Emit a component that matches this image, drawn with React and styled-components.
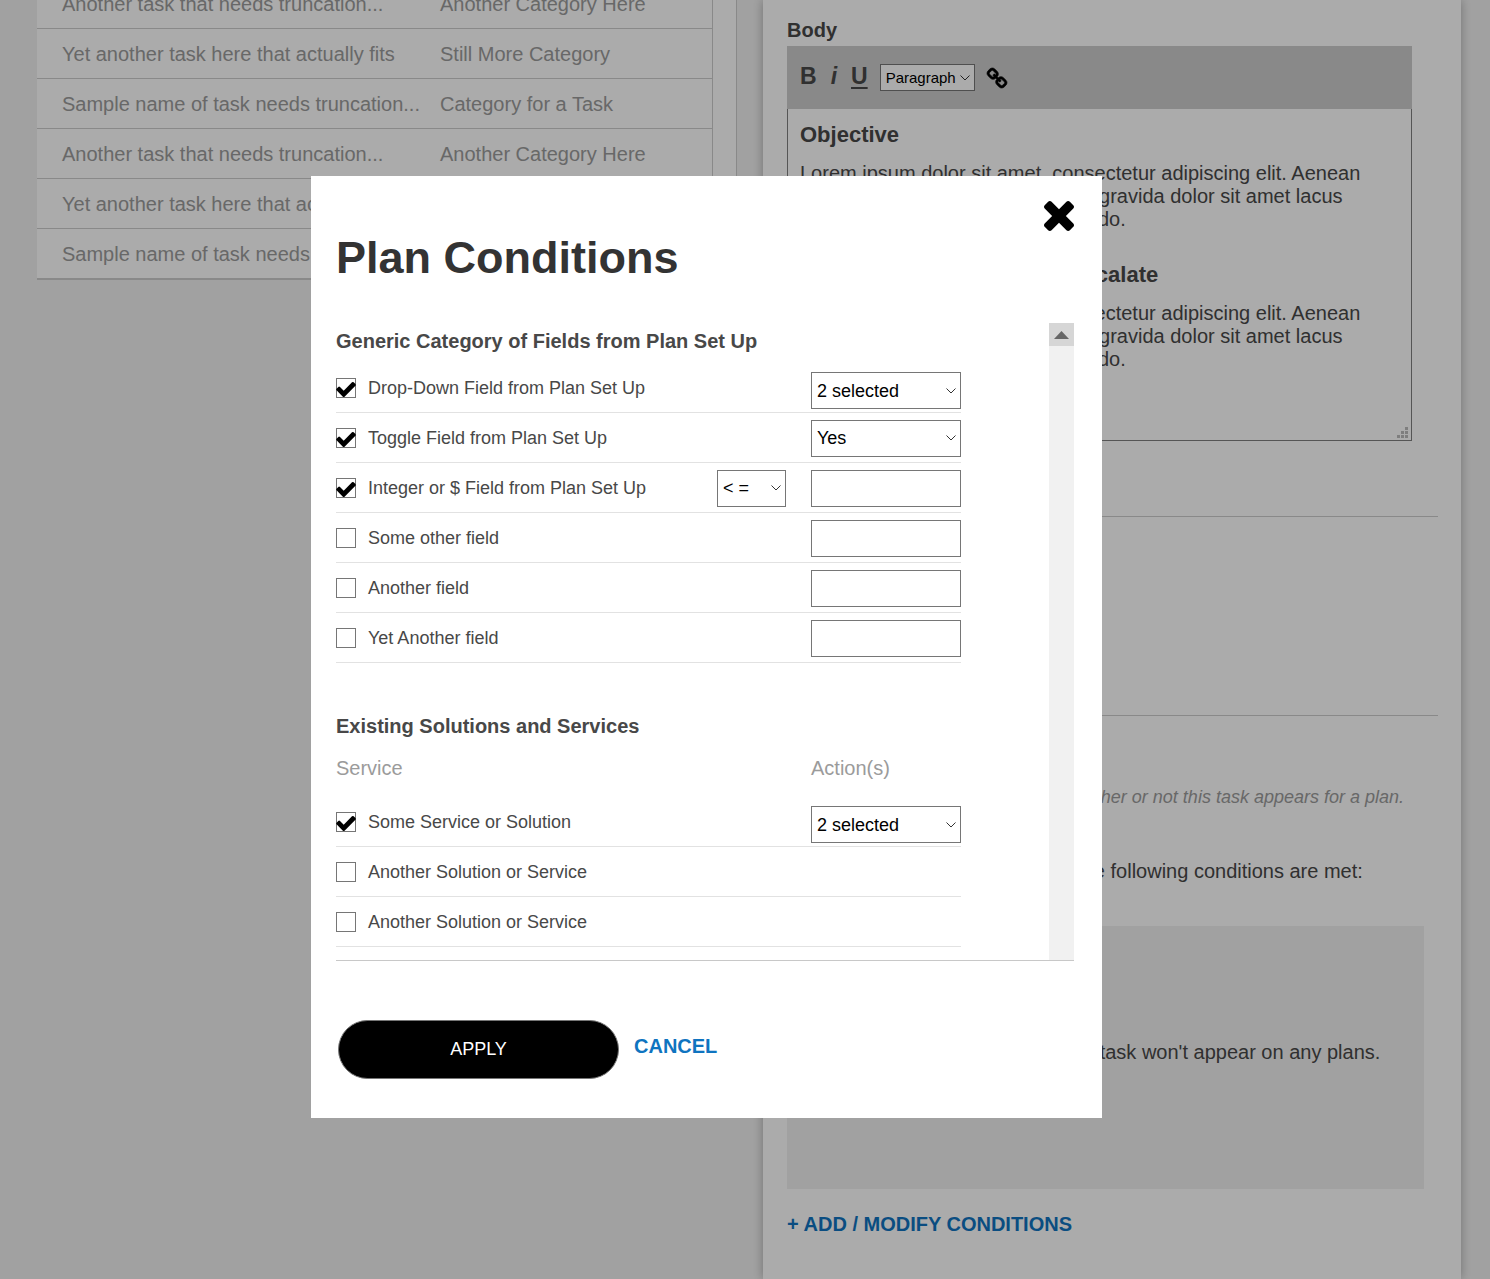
import React, { useState } from "react";
import styled, { createGlobalStyle, css } from "styled-components";

const GlobalStyle = createGlobalStyle`
  *, *::before, *::after { box-sizing: border-box; }
  body {
    margin: 0;
    background: #f1f1f1;
    color: #484848;
    font-family: "Liberation Sans", Arial, Helvetica, sans-serif;
    font-size: 20px;
    line-height: 23px;
  }
  h1, h2, h3, p { margin: 0; }
  button, input, select { font-family: inherit; }
`;

/* ---------- page behind the dialog ---------- */

const Page = styled.div`
  display: grid;
  grid-template-columns: minmax(0, 700fr) minmax(0, 698fr);
  gap: 26px;
  height: 100vh;
  padding: 0 29px 0 37px;
  overflow: hidden;
`;

const TaskPane = styled.section`
  align-self: start;
  margin-top: -21px;
  padding-right: 23px;
  background: #fff;
  border-right: 1px solid #ccc;
`;

const TaskTable = styled.table`
  width: 100%;
  border-collapse: separate;
  border-spacing: 0;
  table-layout: fixed;
  border-right: 1px solid #ccc;
  border-bottom: 1px solid #ccc;
`;

const TaskCell = styled.td`
  width: ${(p) => (p.$name ? "56%" : "44%")};
  height: 50px;
  padding: 2px 0 0 25px;
  border-bottom: 1px solid #ccc;
  color: #9b9b9b;
  white-space: nowrap;
`;

const DetailPanel = styled.main`
  display: flex;
  flex-direction: column;
  padding: 19px 23px 0 24px;
  background: #fff;
  box-shadow: 0 0 10px rgba(0, 0, 0, 0.3);
`;

const EditorLabel = styled.h2`
  margin-bottom: 4px;
  font-size: 20px;
  line-height: 23px;
`;

const Editor = styled.div`
  margin-right: 26px;
`;

const Toolbar = styled.div`
  display: flex;
  align-items: center;
  gap: 12px;
  height: 63px;
  padding: 0 13px;
  background: #ccc;
`;

const FormatGroup = styled.div`
  display: flex;
  gap: 14px;
  padding-bottom: 4px;
`;

const FormatButton = styled.button`
  padding: 0;
  border: 0;
  background: none;
  color: #484848;
  font-size: 23px;
  font-weight: bold;
  line-height: 28px;
  font-style: ${(p) => (p.$italic ? "italic" : "normal")};
  text-decoration: ${(p) => (p.$underline ? "underline" : "none")};
  text-decoration-thickness: 2px;
  text-underline-offset: 3px;
`;

const IconButton = styled.button`
  display: flex;
  padding: 0;
  border: 0;
  background: none;
  color: #000;
`;

const EditorBody = styled.div`
  display: flex;
  flex-direction: column;
  height: 332px;
  padding: 12px 12px 1px;
  border: 1px solid #7f7f7f;
  border-top: 0;
`;

const EditorHeading = styled.h3`
  margin-bottom: 14px;
  font-size: 22px;
  line-height: 27px;
`;

const EditorText = styled.p`
  margin-bottom: 30px;
`;

const ResizeGrip = styled.svg`
  align-self: flex-end;
  flex: none;
  margin: auto -9px 1px 0;
`;

const Rule = styled.hr`
  width: 100%;
  height: 1px;
  margin: ${(p) => (p.$first ? "75px 0 0" : "198px 0 0")};
  border: 0;
  background: #ccc;
`;

const Hint = styled.p`
  margin-top: 70px;
  margin-right: 34px;
  color: #9b9b9b;
  font-size: 18px;
  font-style: italic;
  text-align: right;
  white-space: nowrap;
`;

const Statement = styled.p`
  margin-top: 51px;
  white-space: nowrap;
`;

const ConditionsBox = styled.div`
  display: flex;
  align-items: center;
  justify-content: center;
  height: 263px;
  margin-top: 43px;
  margin-right: 14px;
  padding-bottom: 10px;
  background: #f1f1f1;
  white-space: nowrap;
`;

const ActionLink = styled.a`
  color: #0f74c0;
  font-weight: bold;
  text-decoration: none;
`;

const AddLink = styled(ActionLink)`
  align-self: flex-start;
  margin-top: 24px;
`;

/* ---------- form parts ---------- */

const SelectFrame = styled.span`
  display: inline-grid;
  flex: none;
  align-items: center;
  width: ${(p) => p.$width}px;
  margin-top: ${(p) => (p.$multi ? 5 : 0)}px;

  & > * { grid-area: 1 / 1; }
  & > svg {
    justify-self: end;
    margin-right: 5px;
    pointer-events: none;
  }
`;

const SelectBox = styled.select`
  width: 100%;
  height: 37px;
  padding: 0 5px;
  border: 1px solid #767676;
  border-radius: 0;
  background: #fff;
  color: #000;
  font-size: 18px;
  appearance: none;

  ${(p) =>
    p.$compact &&
    css`
      height: 27px;
      font-size: 15px;
    `}
`;

const TextBox = styled.input`
  flex: none;
  width: 150px;
  height: 37px;
  padding: 0 5px;
  border: 1px solid #767676;
  border-radius: 0;
  background: #fff;
  font-size: 18px;
`;

const CheckFrame = styled.span`
  display: grid;
  flex: none;
  width: 20px;
  height: 20px;

  & > * { grid-area: 1 / 1; }
  & > svg { pointer-events: none; align-self: center; margin-top: 3px; }
`;

const CheckInput = styled.input`
  width: 20px;
  height: 20px;
  margin: 0;
  border: 1px solid #767676;
  background: #fff;
  appearance: none;
`;

/* ---------- dialog ---------- */

const Overlay = styled.div`
  position: fixed;
  inset: 0;
  display: flex;
  align-items: flex-start;
  padding: 176px 0 0 311px;
  background: rgba(0, 0, 0, 0.33);
`;

const Dialog = styled.section`
  display: flex;
  flex-direction: column;
  width: 791px;
  padding: 25px 28px 39px 25px;
  background: #fff;
`;

const CloseButton = styled(IconButton)`
  align-self: flex-end;
`;

const DialogTitle = styled.h1`
  margin: 0 0 38px;
  color: #333;
  font-size: 45px;
  line-height: 54px;
`;

const ScrollArea = styled.div`
  display: flex;
  justify-content: space-between;
  border-bottom: 1px solid #c8c8c8;
`;

const ScrollContent = styled.div`
  width: 625px;
  padding: 6px 0 13px;
`;

const ScrollTrack = styled.div`
  width: 25px;
  background: #f1f1f1;
`;

const ScrollButton = styled.button`
  display: flex;
  align-items: center;
  justify-content: center;
  width: 100%;
  height: 23px;
  padding: 0;
  border: 0;
  background: #d6d6d6;
`;

const GroupTitle = styled.h2`
  margin-top: ${(p) => (p.$spaced ? 51 : 0)}px;
  font-size: 20px;
  line-height: 24px;
`;

const GroupRows = styled.div`
  margin-top: 10px;
`;

const ColumnHeads = styled.div`
  display: grid;
  grid-template-columns: 1fr 150px;
  margin: 19px 0 17px;
  color: #9b9b9b;
`;

const FieldRow = styled.div`
  display: flex;
  align-items: center;
  gap: 25px;
  height: 50px;
  padding-top: 1px;
  border-bottom: 1px solid #e2e2e2;
`;

const FieldLabel = styled.label`
  display: flex;
  flex: 1;
  align-items: center;
  gap: 12px;
  font-size: 18px;
`;

const DialogActions = styled.div`
  display: flex;
  align-items: center;
  gap: 15px;
  margin: 59px 0 0 2px;
`;

const ApplyButton = styled.button`
  width: 281px;
  height: 59px;
  border: 1px solid #767676;
  border-radius: 30px;
  background: #000;
  color: #fff;
  font-size: 18px;
`;

const CancelLink = styled(ActionLink)`
  padding-bottom: 6px;
`;

/* ---------- icons ---------- */

const CheckIcon = () => (
  <svg width="20" height="15" viewBox="121 334 1550 1188" fill="#000" aria-hidden="true">
    <path d="M1671 566q0 40-28 68l-724 724-136 136q-28 28-68 28t-68-28l-136-136-362-362q-28-28-28-68t28-68l136-136q28-28 68-28t68 28l294 295 656-657q28-28 68-28t68 28l136 136q28 28 28 68z" />
  </svg>
);

const CloseIcon = () => (
  <svg width="30" height="30" viewBox="302 366 1188 1188" fill="currentColor" aria-hidden="true">
    <path d="M1490 1322q0 40-28 68l-136 136q-28 28-68 28t-68-28l-294-294-294 294q-28 28-68 28t-68-28l-136-136q-28-28-28-68t28-68l294-294-294-294q-28-28-28-68t28-68l136-136q28-28 68-28t68 28l294 294 294-294q28-28 68-28t68 28l136 136q28 28 28 68t-28 68l-294 294 294 294q28 28 28 68z" />
  </svg>
);

const ChainIcon = () => (
  <svg width="20" height="20" viewBox="80 16 1632 1632" fill="currentColor" stroke="currentColor" strokeWidth="50" overflow="visible" aria-hidden="true">
    <path d="M1520 1216q0-40-28-68l-208-208q-28-28-68-28-42 0-72 32 3 3 19 18.500t21.500 21.500 15 19 13 25.500 3.500 27.500q0 40-28 68t-68 28q-15 0-27.500-3.500t-25.500-13-19-15-21.500-21.500-18.500-19q-33 31-33 73 0 40 28 68l206 207q27 27 68 27 40 0 68-26l147-146q28-28 28-67zm-703-705q0-40-28-68l-206-207q-28-28-68-28-39 0-68 27l-147 146q-28 28-28 67 0 40 28 68l208 208q27 27 68 27 42 0 72-31-3-3-19-18.500t-21.500-21.500-15-19-13-25.500-3.500-27.500q0-40 28-68t68-28q15 0 27.500 3.500t25.500 13 19 15 21.500 21.500 18.500 19q33-31 33-73zm895 705q0 120-85 203l-147 146q-83 83-203 83-121 0-204-85l-206-207q-83-83-83-203 0-123 88-209l-88-88q-86 88-208 88-120 0-204-84l-208-208q-84-84-84-204t85-203l147-146q83-83 203-83 121 0 204 85l206 207q83 83 83 203 0 123-88 209l88 88q86-88 208-88 120 0 204 84l208 208q84 84 84 204z" />
  </svg>
);

const Chevron = () => (
  <svg width="10" height="6" viewBox="0 0 10 6" fill="none" stroke="#333" aria-hidden="true">
    <path d="M0.500 0.500L5 5L9.500 0.500" />
  </svg>
);

const GripIcon = () => (
  <ResizeGrip width="11" height="11" viewBox="0 0 11 11" fill="#bcbcbc" aria-hidden="true">
    <path d="M8 0h3v3h-3zM4 4h3v3h-3zM8 4h3v3h-3zM0 8h3v3h-3zM4 8h3v3h-3zM8 8h3v3h-3z" />
  </ResizeGrip>
);

/* ---------- composed parts ---------- */

function Select({ label, options, width = 150, multi, compact }) {
  return (
    <SelectFrame $width={width} $multi={multi}>
      <SelectBox aria-label={label} $compact={compact}>
        {options.map((o) => (
          <option key={o}>{o}</option>
        ))}
      </SelectBox>
      <Chevron />
    </SelectFrame>
  );
}

function Field({ id, label, initial = false, children }) {
  const [checked, setChecked] = useState(initial);
  return (
    <FieldRow>
      <FieldLabel htmlFor={id}>
        <CheckFrame>
          <CheckInput
            id={id}
            type="checkbox"
            checked={checked}
            onChange={(e) => setChecked(e.target.checked)}
          />
          {checked && <CheckIcon />}
        </CheckFrame>
        {label}
      </FieldLabel>
      {children}
    </FieldRow>
  );
}

const tasks = [
  ["Another task that needs truncation...", "Another Category Here"],
  ["Yet another task here that actually fits", "Still More Category"],
  ["Sample name of task needs truncation...", "Category for a Task"],
  ["Another task that needs truncation...", "Another Category Here"],
  ["Yet another task here that actually fits", "Still More Category"],
  ["Sample name of task needs truncation...", "Category for a Task"],
];

const lorem =
  "Lorem ipsum dolor sit amet, consectetur adipiscing elit. Aenean euismod bibendum laoreet. Proin gravida dolor sit amet lacus accumsan et viverra justo commodo.";

export default function App() {
  return (
    <>
      <GlobalStyle />
      <Page>
        <TaskPane>
          <TaskTable>
            <tbody>
              {tasks.map(([name, category], i) => (
                <tr key={i}>
                  <TaskCell $name>{name}</TaskCell>
                  <TaskCell>{category}</TaskCell>
                </tr>
              ))}
            </tbody>
          </TaskTable>
        </TaskPane>

        <DetailPanel>
          <EditorLabel>Body</EditorLabel>
          <Editor>
            <Toolbar>
              <FormatGroup>
                <FormatButton aria-label="Bold">B</FormatButton>
                <FormatButton aria-label="Italic" $italic>i</FormatButton>
                <FormatButton aria-label="Underline" $underline>U</FormatButton>
              </FormatGroup>
              <Select label="Text style" options={["Paragraph"]} width={95} compact />
              <IconButton aria-label="Insert link">
                <ChainIcon />
              </IconButton>
            </Toolbar>
            <EditorBody>
              <EditorHeading>Objective</EditorHeading>
              <EditorText>{lorem}</EditorText>
              <EditorHeading>Reasons to Involve Us or Escalate</EditorHeading>
              <EditorText>{lorem}</EditorText>
              <GripIcon />
            </EditorBody>
          </Editor>
          <Rule $first />
          <Rule />
          <Hint>Conditions determine whether or not this task appears for a plan.</Hint>
          <Statement>This task will appear on a plan if the following conditions are met:</Statement>
          <ConditionsBox>If no conditions are listed, this task won't appear on any plans.</ConditionsBox>
          <AddLink href="#conditions">+ ADD / MODIFY CONDITIONS</AddLink>
        </DetailPanel>
      </Page>

      <Overlay>
        <Dialog role="dialog" aria-modal="true" aria-labelledby="dialog-title">
          <CloseButton aria-label="Close">
            <CloseIcon />
          </CloseButton>
          <DialogTitle id="dialog-title">Plan Conditions</DialogTitle>
          <ScrollArea>
            <ScrollContent>
              <GroupTitle>Generic Category of Fields from Plan Set Up</GroupTitle>
              <GroupRows>
                <Field id="dropdown" label="Drop-Down Field from Plan Set Up" initial>
                  <Select label="Drop-down values" options={["2 selected"]} multi />
                </Field>
                <Field id="toggle" label="Toggle Field from Plan Set Up" initial>
                  <Select label="Toggle value" options={["Yes", "No"]} />
                </Field>
                <Field id="integer" label="Integer or $ Field from Plan Set Up" initial>
                  <Select label="Comparison" options={["< =", "> =", "="]} width={69} />
                  <TextBox aria-label="Integer value" />
                </Field>
                <Field id="other" label="Some other field">
                  <TextBox aria-label="Some other field value" />
                </Field>
                <Field id="another" label="Another field">
                  <TextBox aria-label="Another field value" />
                </Field>
                <Field id="yet-another" label="Yet Another field">
                  <TextBox aria-label="Yet Another field value" />
                </Field>
              </GroupRows>
              <GroupTitle $spaced>Existing Solutions and Services</GroupTitle>
              <ColumnHeads>
                <span>Service</span>
                <span>Action(s)</span>
              </ColumnHeads>
              <Field id="service-1" label="Some Service or Solution" initial>
                <Select label="Service actions" options={["2 selected"]} multi />
              </Field>
              <Field id="service-2" label="Another Solution or Service" />
              <Field id="service-3" label="Another Solution or Service" />
            </ScrollContent>
            <ScrollTrack>
              <ScrollButton aria-label="Scroll up">
                <svg width="15" height="8" viewBox="0 0 15 8" fill="#666" aria-hidden="true">
                  <path d="M0 8L7.500 0L15 8z" />
                </svg>
              </ScrollButton>
            </ScrollTrack>
          </ScrollArea>
          <DialogActions>
            <ApplyButton type="button">APPLY</ApplyButton>
            <CancelLink href="#cancel">CANCEL</CancelLink>
          </DialogActions>
        </Dialog>
      </Overlay>
    </>
  );
}
